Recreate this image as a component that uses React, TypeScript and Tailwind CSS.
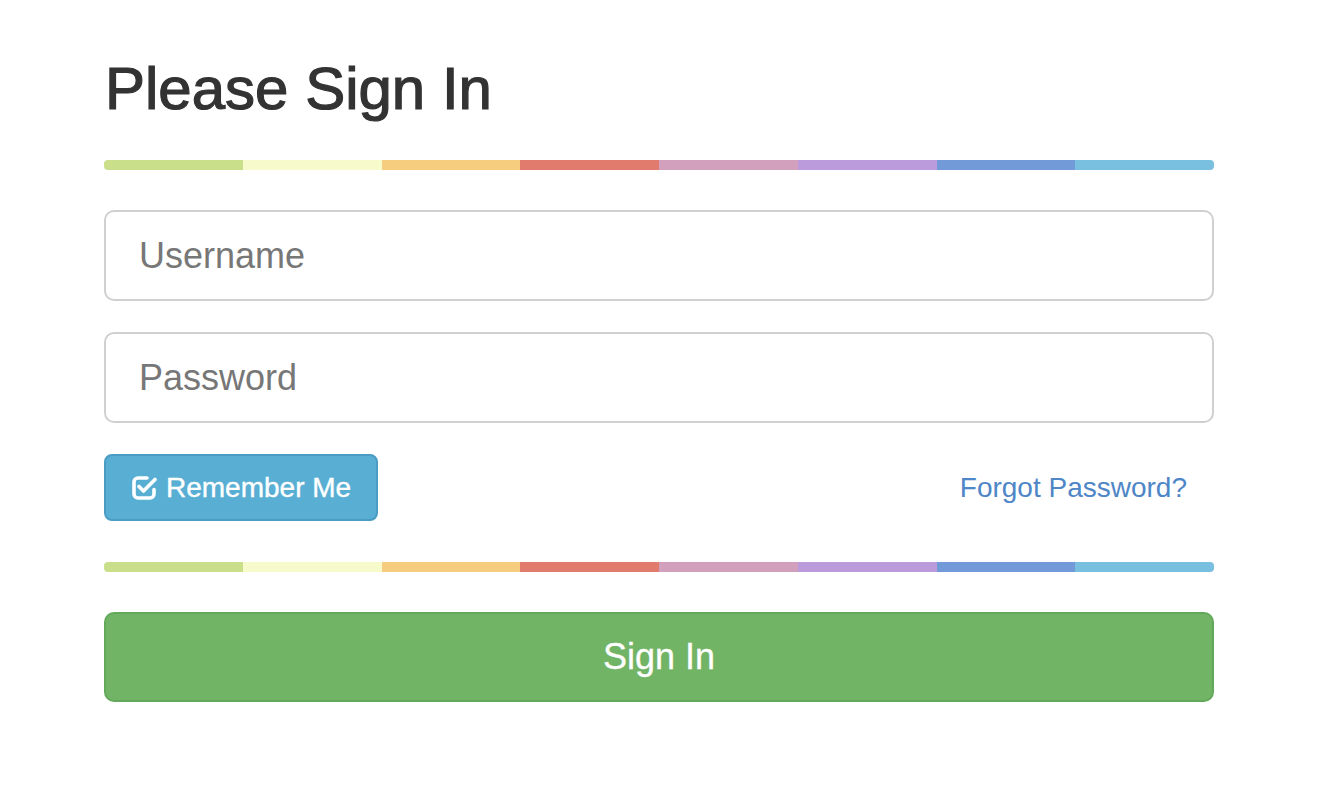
import { useState } from 'react';

const stripes = [
  'bg-[#c9df8a]',
  'bg-[#f7fbcb]',
  'bg-[#f6cd7f]',
  'bg-[#e17b6e]',
  'bg-[#d29fbc]',
  'bg-[#bb9bdb]',
  'bg-[#729ad9]',
  'bg-[#79bfdf]',
];

function ColorBar() {
  return (
    <div className="flex h-[10px] rounded-[4px] overflow-hidden">
      {stripes.map((c) => (
        <div key={c} className={`flex-1 ${c}`}></div>
      ))}
    </div>
  );
}

// fa-check-square-o style: open corner top-right, check runs out of it
function CheckSquareIcon() {
  return (
    <svg width="26" height="26" viewBox="0 0 26 26" fill="none" stroke="currentColor" strokeWidth="3.6" strokeLinecap="round" strokeLinejoin="round">
      <path d="M16 3H7a4 4 0 0 0-4 4v12a4 4 0 0 0 4 4h12a4 4 0 0 0 4-4v-4.5" />
      <path d="M8 11.5l4.5 4.5L24 4.5" />
    </svg>
  );
}

export default function App() {
  const [remember, setRemember] = useState(true);

  return (
    <div className="min-h-screen bg-white font-['Liberation_Sans',Arial,sans-serif]">
      <div className="w-[1110px] ml-[104px] pt-[56px]">
        {/* Heading */}
        <h2 className="text-[60px] leading-[66px] text-[#333333] ml-[1px] [-webkit-text-stroke:1.2px_#333333]">Please Sign In</h2>

        <div className="mt-[38px]">
          <ColorBar />
        </div>

        {/* Fields */}
        <input
          type="text"
          placeholder="Username"
          className="mt-[40px] block w-full h-[91px] px-[33px] text-[36px] text-[#555] placeholder:text-[#777777] border-2 border-[#d0d0d0] rounded-[10px] outline-none"
        />
        <input
          type="password"
          placeholder="Password"
          className="mt-[31px] block w-full h-[91px] px-[33px] text-[36px] text-[#555] placeholder:text-[#777777] border-2 border-[#d0d0d0] rounded-[10px] outline-none"
        />

        <div className="mt-[31px] flex items-center justify-between">
          <button
            onClick={() => setRemember(!remember)}
            className="flex items-center gap-[9px] h-[67px] w-[274px] pl-[25px] bg-[#58aed3] border-2 border-[#4a9cc4] rounded-[8px] text-white text-[28px] [-webkit-text-stroke:0.4px_#ffffff]"
          >
            <CheckSquareIcon />
            <span>Remember Me</span>
          </button>
          <a href="#" className="pr-[27px] text-[28px] text-[#4f86c7]">
            Forgot Password?
          </a>
        </div>

        <div className="mt-[41px]">
          <ColorBar />
        </div>

        <button className="mt-[40px] block w-full h-[90px] bg-[#72b466] border-2 border-[#63a95b] rounded-[10px] text-white text-[36px] [-webkit-text-stroke:0.3px_#ffffff]">
          Sign In
        </button>
      </div>
    </div>
  );
}
